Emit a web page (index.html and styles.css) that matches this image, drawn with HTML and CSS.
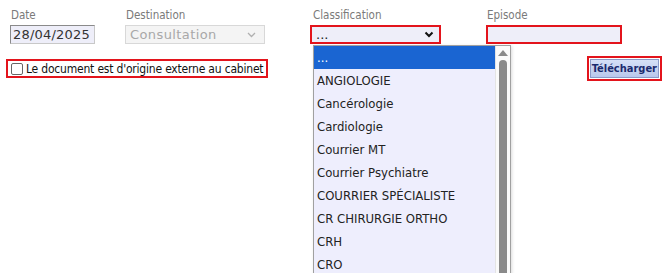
FILE: index.html
```html
<!DOCTYPE html>
<html lang="fr">
  <head>
    <meta charset="UTF-8" />
    <title>Document</title>
    <link rel="stylesheet" href="styles.css">
  </head>
  <body>
    <div class="top-row">
      <div class="field field-date">
        <label>Date</label>
        <div class="input input-date">28/04/2025</div>
      </div>
      <div class="field field-dest">
        <label>Destination</label>
        <div class="input select disabled">
          <span>Consultation</span>
          <svg class="chev" width="9" height="6" viewBox="0 0 9 6"><path d="M1 1 L4.5 4.5 L8 1" fill="none" stroke="#b0b0b0" stroke-width="1.3"/></svg>
        </div>
      </div>
      <div class="field field-class">
        <label>Classification</label>
        <div class="input select flagged">
          <span>...</span>
          <svg class="chev" width="10" height="7" viewBox="0 0 10 7"><path d="M1.5 1.5 L5 5 L8.5 1.5" fill="none" stroke="#111" stroke-width="2"/></svg>
        </div>
        <div class="dropdown">
          <ul class="options">
            <li class="selected">...</li>
            <li>ANGIOLOGIE</li>
            <li>Cancérologie</li>
            <li>Cardiologie</li>
            <li>Courrier MT</li>
            <li>Courrier Psychiatre</li>
            <li>COURRIER SPÉCIALISTE</li>
            <li>CR CHIRURGIE ORTHO</li>
            <li>CRH</li>
            <li>CRO</li>
          </ul>
          <div class="scrollbar">
            <svg class="arrow" width="10" height="7" viewBox="0 0 10 7"><path d="M0 7 L5 1 L10 7 Z" fill="#8a8a8a"/></svg>
            <div class="thumb"></div>
          </div>
        </div>
      </div>
      <div class="field field-episode">
        <label>Episode</label>
        <div class="input input-episode flagged"></div>
      </div>
    </div>

    <div class="second-row">
      <label class="external flagged">
        <span class="box"></span>
        Le document est d'origine externe au cabinet
      </label>
      <div class="upload flagged">
        <button type="button">Télécharger</button>
      </div>
    </div>
  </body>
</html>
```

FILE: styles.css
```css
body {
    margin: 0;
    padding: 0;
    background: #fff;
    font-family: "DejaVu Sans Condensed", "DejaVu Sans", sans-serif;
    font-size: 12px;
    color: #222;
    width: 670px;
    height: 273px;
    overflow: hidden;
}

.top-row {
    display: flex;
    padding: 8px 0 0 10px;
}

.field label {
    display: block;
    color: #7a7a7a;
    font-size: 11.5px;
    height: 17px;
    padding-left: 1px;
}

.field-dest {
    margin-left: 30px;
}

.field-class {
    margin-left: 45px;
    position: relative;
}

.field-class label {
    padding-left: 3px;
}

.field-episode {
    margin-left: 45px;
}

.input {
    box-sizing: border-box;
    height: 19px;
    background: #eeeef9;
    border: 1px solid #b4b4b4;
    font-family: "DejaVu Sans", sans-serif;
    font-size: 13px;
    line-height: 17px;
    padding: 0 2px;
}

.input-date {
    width: 85px;
    border-color: #8a8a8a #c8c8c8 #c8c8c8 #8a8a8a;
    color: #333;
    letter-spacing: 0.2px;
}

.select {
    display: flex;
    align-items: center;
    justify-content: space-between;
}

.disabled {
    width: 140px;
    background: #f4f4f4;
    border-color: #d8d8d8;
    color: #a8a8a8;
    padding: 0 8px 0 4px;
    letter-spacing: 0.4px;
}

.field-class .select {
    width: 131px;
    padding: 0 5px 0 4px;
    line-height: 15px;
}

.flagged {
    border: 2px solid #e3141c;
}

.input-episode {
    width: 136px;
}

.dropdown {
    position: absolute;
    left: 3px;
    top: 37px;
    width: 198px;
    height: 240px;
    box-sizing: border-box;
    border: 1px solid #a0a0a0;
    background: #eeeefd;
    display: flex;
    box-shadow: 1px 1px 3px rgba(0, 0, 0, 0.15);
}

.options {
    list-style: none;
    margin: 0;
    padding: 0;
    flex: 1;
}

.options li {
    height: 23px;
    line-height: 23px;
    padding-left: 3px;
    font-size: 13px;
    color: #222;
}

.options li.selected {
    background: #1a65d2;
    color: #fff;
}

.scrollbar {
    width: 14px;
    background: #fafafa;
    border-left: 1px solid #e4e4e4;
    display: flex;
    flex-direction: column;
    align-items: center;
    padding-top: 3px;
}

.arrow {
    margin-bottom: 4px;
}

.thumb {
    width: 8px;
    flex: 1;
    background: #8a8a8a;
    border-radius: 4px 4px 0 0;
}

.second-row {
    display: flex;
    justify-content: space-between;
    align-items: center;
    padding: 12px 8px 0 6px;
}

.external {
    display: flex;
    align-items: center;
    height: 19px;
    box-sizing: border-box;
    padding: 0 3px 0 3px;
    font-size: 12px;
    letter-spacing: -0.2px;
    color: #111;
}

.box {
    width: 10px;
    height: 10px;
    border: 1px solid #666;
    border-radius: 2px;
    margin-right: 3px;
    background: #fff;
}

.upload {
    padding: 1px;
}

.upload button {
    font-family: "DejaVu Sans Condensed", "DejaVu Sans", sans-serif;
    font-size: 11px;
    font-weight: bold;
    color: #1b2a6e;
    background: linear-gradient(#d6e0f7, #b9c8ec);
    border: 1px solid #8a9ac8;
    padding: 2px 1px;
    height: 19px;
}
```
